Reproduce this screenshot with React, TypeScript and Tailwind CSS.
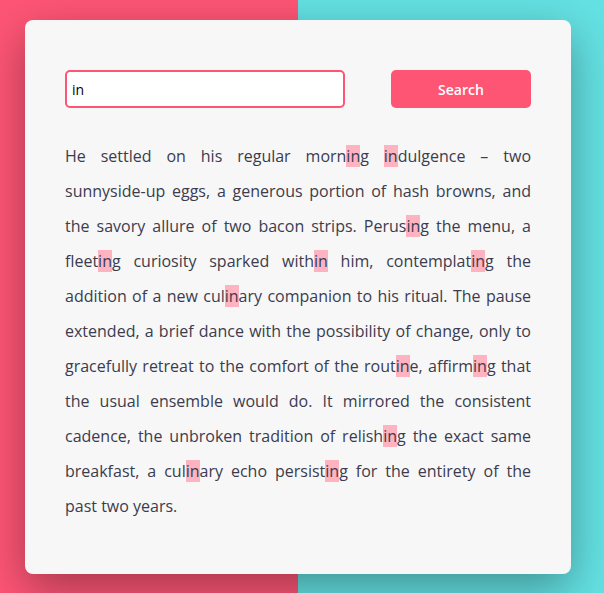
import { useState } from "react";

const STORY =
  "He settled on his regular morning indulgence – two sunnyside-up eggs, a generous portion of hash browns, and the savory allure of two bacon strips. Perusing the menu, a fleeting curiosity sparked within him, contemplating the addition of a new culinary companion to his ritual. The pause extended, a brief dance with the possibility of change, only to gracefully retreat to the comfort of the routine, affirming that the usual ensemble would do. It mirrored the consistent cadence, the unbroken tradition of relishing the exact same breakfast, a culinary echo persisting for the entirety of the past two years.";

function highlight(text: string, term: string, key: string) {
  if (!term) return [text];
  const parts: (string | JSX.Element)[] = [];
  const lower = text.toLowerCase();
  const needle = term.toLowerCase();
  let from = 0;
  let idx = lower.indexOf(needle, from);
  let k = 0;
  while (idx !== -1) {
    if (idx > from) parts.push(text.slice(from, idx));
    parts.push(
      <mark key={`${key}-${k++}`} className="bg-[#ffb3c0] text-inherit">
        {text.slice(idx, idx + needle.length)}
      </mark>
    );
    from = idx + needle.length;
    idx = lower.indexOf(needle, from);
  }
  if (from < text.length) parts.push(text.slice(from));
  return parts;
}

// keep hyphenated words on one line
function renderStory(text: string, term: string) {
  return text.split(/(\S+-\S+)/).map((chunk, i) =>
    /^\S+-\S+$/.test(chunk) ? (
      <span key={i} className="whitespace-nowrap">
        {highlight(chunk, term, `h${i}`)}
      </span>
    ) : (
      highlight(chunk, term, `t${i}`)
    )
  );
}

export default function App() {
  const [query, setQuery] = useState("in");
  const [term, setTerm] = useState("in");

  return (
    <div className="min-h-screen bg-[linear-gradient(90deg,#fe5575_298px,#64e1e3_298px)] pl-[25px] pt-[20px] pb-[19px] font-['Open_Sans',sans-serif]">
      <div className="w-[546px] rounded-lg bg-[#f7f7f7] px-10 pt-[50px] pb-[50px] shadow-[0_15px_45px_rgba(0,0,0,0.35)]">
        <div className="flex items-center justify-between">
          <input
            value={query}
            onChange={(e) => setQuery(e.target.value)}
            className="h-[38px] w-[280px] rounded-[5px] border-2 border-[#fe5575] bg-white px-[5px] text-[14px] text-black outline-none"
          />
          <button
            type="button"
            onClick={() => setTerm(query)}
            className="h-[38px] w-[140px] rounded-[5px] bg-[#fe5575] text-[14px] font-semibold text-white"
          >
            Search
          </button>
        </div>
        <p className="mt-[31px] text-justify text-[16px] leading-[35px] text-[#3c3c4e]">
          {renderStory(STORY, term)}
        </p>
      </div>
    </div>
  );
}
